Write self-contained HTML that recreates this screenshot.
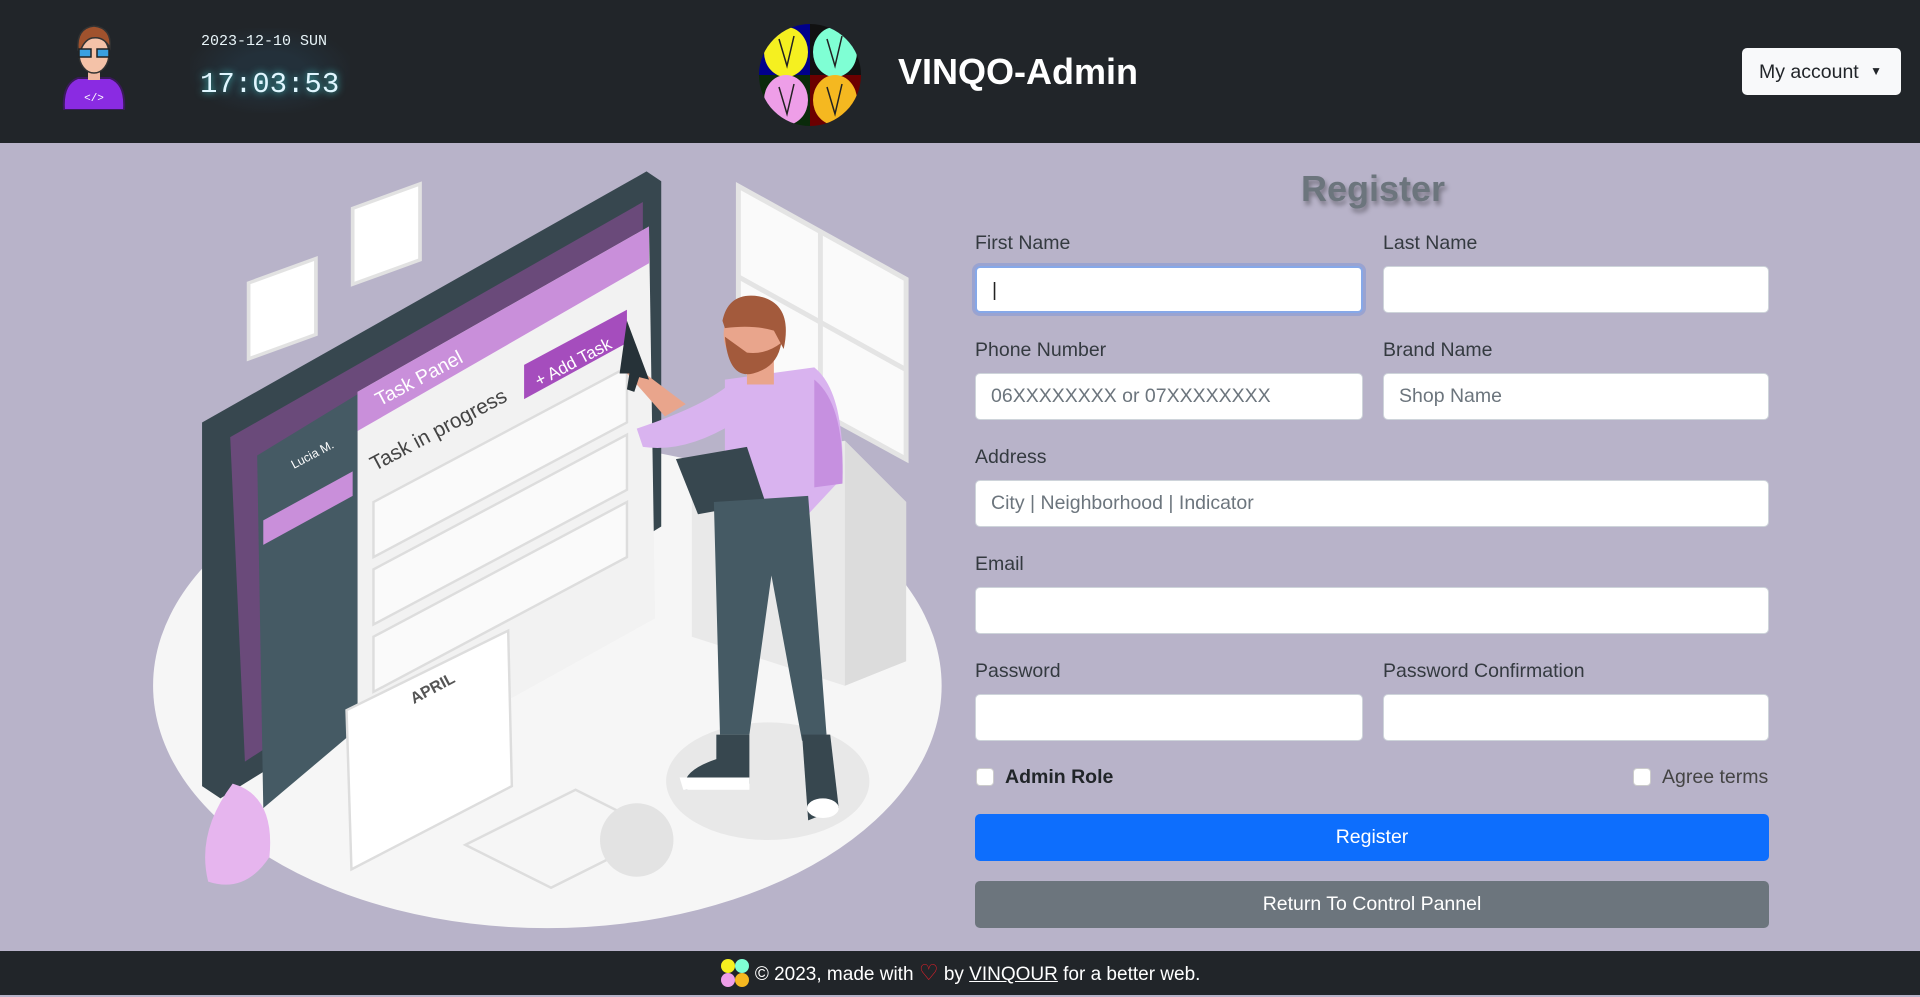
<!DOCTYPE html>
<html><head><meta charset="utf-8"><style>
*{box-sizing:border-box;margin:0;padding:0}
body{width:1920px;height:995px;overflow:hidden;background:#b8b3c9;font-family:"Liberation Sans",sans-serif;position:relative}
.hdr{position:absolute;left:0;top:0;width:1920px;height:143px;background:#212529}
.ftr{position:absolute;left:0;top:951px;width:1920px;height:44px;background:#212529;color:#fff;font-size:19px;text-align:center;line-height:44px}
.ftr a{color:#fff;text-decoration:underline}
.abs{position:absolute}
.lbl{position:absolute;font-size:19.5px;color:#343a40}
.inp{position:absolute;height:47px;background:#fff;border:1px solid #ced4da;border-radius:5px;font-size:19.5px;color:#6c757d;padding-left:15px;line-height:45px}
.btn{position:absolute;left:975px;width:794px;height:47px;border-radius:5px;color:#fff;font-size:19.5px;text-align:center;line-height:47px}
.cb{position:absolute;width:18px;height:18px;background:#fff;border-radius:4px;border:1px solid #ccc}
</style></head><body>
<div class="hdr">
 <svg class="abs" style="left:58px;top:22px" width="72" height="88" viewBox="0 0 72 88">
  <path d="M6 88 Q4 62 20 56 L52 56 Q68 62 66 88 Z" fill="#8a2be2" stroke="#3a1a5a" stroke-width="2"/>
  <rect x="30" y="46" width="12" height="12" fill="#f0b8a0"/>
  <ellipse cx="36" cy="32" rx="15" ry="19" fill="#f4c2a8" stroke="#333" stroke-width="1.5"/>
  <path d="M20 28 Q18 6 36 4 Q54 6 52 26 Q46 14 34 16 Q26 18 22 30Z" fill="#a0522d" stroke="#333" stroke-width="1.5"/>
  <rect x="21" y="27" width="12" height="8" fill="#3aa0e0" stroke="#222" stroke-width="1.5"/>
  <rect x="39" y="27" width="12" height="8" fill="#3aa0e0" stroke="#222" stroke-width="1.5"/>
  <text x="36" y="79" font-size="11" fill="#fff" text-anchor="middle" font-family="Liberation Mono">&lt;/&gt;</text>
 </svg>
 <div class="abs" style="left:190px;top:28px;width:160px;height:85px;background:radial-gradient(ellipse,#23303a 30%,#212529 75%)"></div>
 <div class="abs" style="left:201px;top:33px;font-family:'Liberation Mono',monospace;font-size:15px;color:#e8f4f8">2023-12-10 SUN</div>
 <div class="abs" style="left:200px;top:68px;font-family:'Liberation Mono',monospace;font-size:29px;color:#e0f6ff;text-shadow:0 0 8px #4cc">17:03:53</div>
 <svg class="abs" style="left:759px;top:24px" width="102" height="102" viewBox="0 0 102 102">
  <clipPath id="c"><circle cx="51" cy="51" r="51"/></clipPath>
  <g clip-path="url(#c)">
  <rect x="0" y="0" width="51" height="51" fill="#00008b"/><rect x="51" y="0" width="51" height="51" fill="#111"/>
  <rect x="0" y="51" width="51" height="51" fill="#0a2a0a"/><rect x="51" y="51" width="51" height="51" fill="#6b0000"/>
  <ellipse cx="27" cy="28" rx="22" ry="25" fill="#f5f020"/><ellipse cx="76" cy="28" rx="22" ry="25" fill="#7fffd4"/>
  <ellipse cx="27" cy="76" rx="22" ry="25" fill="#ee9ee8"/><ellipse cx="76" cy="76" rx="22" ry="25" fill="#f5b820"/>
  <g stroke="#222" stroke-width="1.5" fill="none"><path d="M20 15 L28 42 L35 12"/><path d="M68 15 L76 42 L83 12"/><path d="M20 63 L28 90 L35 60"/><path d="M68 63 L76 90 L83 60"/></g>
  </g>
 </svg>
 <div class="abs" style="left:898px;top:51px;font-size:36px;font-weight:bold;color:#fff">VINQO-Admin</div>
 <div class="abs" style="left:1742px;top:48px;width:159px;height:47px;background:#f8f9fa;border-radius:5px;font-size:19.5px;color:#212529;line-height:47px;padding-left:17px">My account <span style="font-size:12px;vertical-align:3px;margin-left:6px">&#9660;</span></div>
</div>

<svg class="abs" style="left:0;top:0" width="1920" height="995" viewBox="0 0 1568 812.6">
 <ellipse cx="447" cy="560" rx="322" ry="198" fill="#f6f6f6"/>
 <rect x="203" y="225" width="55" height="62" fill="#fff" stroke="#e2e2e2" stroke-width="3" transform="skewY(-20) translate(0,80)"/>
 <rect x="288" y="165" width="55" height="62" fill="#fff" stroke="#e2e2e2" stroke-width="3" transform="skewY(-20) translate(0,110)"/>
 <polygon points="603,152 740,228 740,375 603,300" fill="#fafafa" stroke="#e4e4e4" stroke-width="4"/>
 <line x1="670" y1="190" x2="670" y2="337" stroke="#e4e4e4" stroke-width="4"/>
 <line x1="603" y1="226" x2="740" y2="302" stroke="#e4e4e4" stroke-width="4"/>
 <polygon points="565,380 690,360 740,410 740,540 690,560 565,520" fill="#e9e9e9"/>
 <polygon points="690,360 740,410 740,540 690,560" fill="#dcdcdc"/>
 <ellipse cx="627" cy="638" rx="83" ry="48" fill="#e8e8e8"/>
 <polygon points="165,345 528,140 540,148 540,430 180,652 165,642" fill="#37474f"/>
 <polygon points="188,357 525,165 525,410 200,622" fill="#6a4a7a"/>
 <polygon points="210,372 292,322 292,595 215,660" fill="#455a64"/>
 <polygon points="292,320 530,185 535,505 292,640" fill="#f2f2f2"/>
 <polygon points="292,320 530,185 530,215 292,352" fill="#c98fda"/>
 <polygon points="215,425 288,385 288,405 215,445" fill="#c98fda"/>
 <polygon points="428,298 512,253 512,280 428,326" fill="#a54dbd"/>
 <text x="0" y="0" transform="translate(440,316) rotate(-28)" font-size="14" fill="#fff">+ Add Task</text>
 <text x="0" y="0" transform="translate(310,332) rotate(-28)" font-size="16" fill="#fff">Task Panel</text>
 <text x="0" y="0" transform="translate(306,385) rotate(-28)" font-size="17" fill="#444">Task in progress</text>
 <text x="0" y="0" transform="translate(240,383) rotate(-28)" font-size="10" fill="#fff">Lucia M.</text>
 <polygon points="305,410 512,300 512,345 305,455" fill="#fafafa" stroke="#ddd" stroke-width="2"/>
 <polygon points="305,465 512,355 512,400 305,510" fill="#fafafa" stroke="#ddd" stroke-width="2"/>
 <polygon points="305,520 512,410 512,455 305,565" fill="#fafafa" stroke="#ddd" stroke-width="2"/>
 <polygon points="283,580 415,515 418,642 287,710" fill="#fff" stroke="#ddd" stroke-width="2"/>
 <text x="0" y="0" transform="translate(338,575) rotate(-28)" font-size="13" font-weight="bold" fill="#555">APRIL</text>
 <polygon points="380,690 470,645 540,680 450,725" fill="none" stroke="#ddd" stroke-width="2"/>
 <circle cx="520" cy="686" r="30" fill="#e3e3e3"/>
 <path d="M190 640 Q225 650 220 700 Q200 730 170 720 Q160 680 190 640Z" fill="#e6b5ee"/>
 <path d="M543 340 L512 305 L520 300 L560 330Z" fill="#e9a58c"/>
 <path d="M520 350 Q580 330 600 310 L600 345 Q560 370 525 365Z" fill="#d9b3ef"/>
 <path d="M592 310 L665 300 Q690 320 688 390 L660 420 L592 420Z" fill="#d9b3ef"/>
 <path d="M665 310 Q690 330 688 395 L665 398Z" fill="#c690e0"/>
 <polygon points="552,375 610,365 625,410 570,420" fill="#37474f"/>
 <path d="M583 410 L660 405 L675 600 L655 605 L630 470 L612 600 L588 600Z" fill="#455a64"/>
 <path d="M585 600 L612 600 L612 640 L560 645 Q555 630 585 620Z" fill="#37474f"/>
 <path d="M555 635 L612 635 L612 645 L558 645Z" fill="#fff"/>
 <path d="M655 600 L678 600 L685 660 L660 670Z" fill="#37474f"/>
 <ellipse cx="672" cy="660" rx="13" ry="8" fill="#fff"/>
 <rect x="610" y="292" width="22" height="22" fill="#e9a58c"/>
 <ellipse cx="615" cy="273" rx="24" ry="28" fill="#e9a58c"/>
 <path d="M592 275 Q595 310 615 305 Q635 300 638 280 Q625 290 610 288Z" fill="#a35a3c"/>
 <path d="M590 262 Q595 238 620 242 Q648 248 640 285 L632 270 Q615 265 592 268Z" fill="#a35a3c"/>
 <path d="M512 262 L530 310 L522 308 L518 320 L512 318 L514 305 L506 305Z" fill="#263238"/>
</svg>

<div class="abs" style="left:973px;top:168px;width:800px;text-align:center;font-size:36px;font-weight:bold;color:#6c757d;text-shadow:2px 4px 5px rgba(0,0,0,.35)">Register</div>

<div class="lbl" style="left:975px;top:232px">First Name</div>
<div class="lbl" style="left:1383px;top:232px">Last Name</div>
<div class="inp" style="left:975px;top:266px;width:388px;border:2px solid #86a8e8;box-shadow:0 0 0 3px rgba(110,140,220,.4)"><span style="color:#222">|</span></div>
<div class="inp" style="left:1383px;top:266px;width:386px"></div>

<div class="lbl" style="left:975px;top:339px">Phone Number</div>
<div class="lbl" style="left:1383px;top:339px">Brand Name</div>
<div class="inp" style="left:975px;top:373px;width:388px">06XXXXXXXX or 07XXXXXXXX</div>
<div class="inp" style="left:1383px;top:373px;width:386px">Shop Name</div>

<div class="lbl" style="left:975px;top:446px">Address</div>
<div class="inp" style="left:975px;top:480px;width:794px">City | Neighborhood | Indicator</div>

<div class="lbl" style="left:975px;top:553px">Email</div>
<div class="inp" style="left:975px;top:587px;width:794px"></div>

<div class="lbl" style="left:975px;top:660px">Password</div>
<div class="lbl" style="left:1383px;top:660px">Password Confirmation</div>
<div class="inp" style="left:975px;top:694px;width:388px"></div>
<div class="inp" style="left:1383px;top:694px;width:386px"></div>

<div class="cb" style="left:976px;top:768px"></div>
<div class="lbl" style="left:1005px;top:766px;font-weight:bold;color:#212529">Admin Role</div>
<div class="cb" style="left:1633px;top:768px"></div>
<div class="lbl" style="left:1662px;top:766px;color:#444">Agree terms</div>

<div class="btn" style="top:814px;background:#0d6efd">Register</div>
<div class="btn" style="top:881px;background:#6c757d">Return To Control Pannel</div>

<div class="ftr">
 <svg width="30" height="30" viewBox="0 0 30 30" style="vertical-align:-8px"><circle cx="8" cy="8" r="7" fill="#f5f020"/><circle cx="22" cy="8" r="7" fill="#7fffd4"/><circle cx="8" cy="22" r="7" fill="#ee9ee8"/><circle cx="22" cy="22" r="7" fill="#f5b820"/></svg>
 © 2023, made with <span style="color:#e0202a;font-size:22px">&#9825;</span> by <a>VINQOUR</a> for a better web.
</div>
</body></html>
